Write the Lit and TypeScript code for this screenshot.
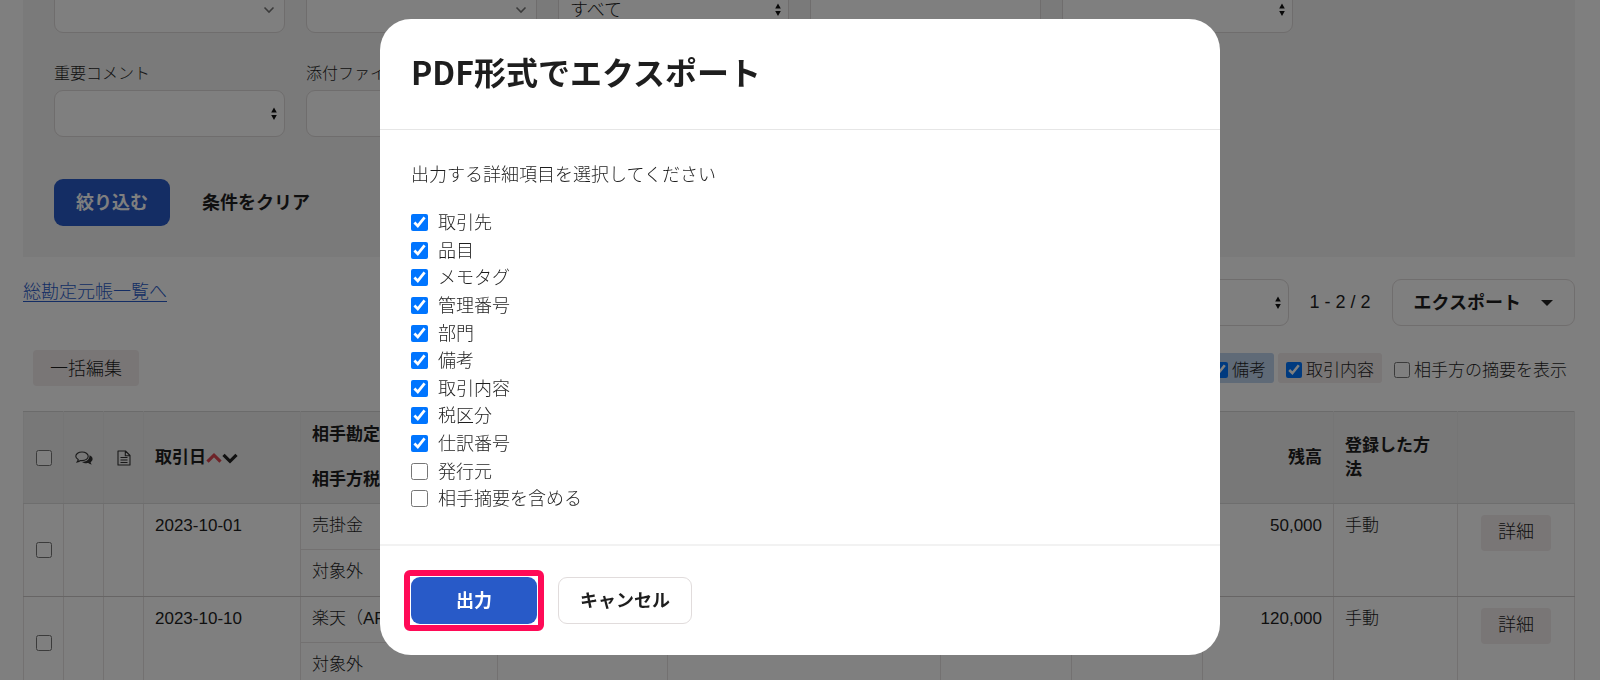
import { LitElement, html, css, svg } from "lit";
import { customElement, property, state } from "lit/decorators.js";
import { classMap } from "lit/directives/class-map.js";

interface OutputItem {
  id: string;
  label: string;
  checked: boolean;
}

interface LedgerRow {
  date: string;
  account: string;
  tax: string;
  balance: string;
  method: string;
}

const LEDGER: LedgerRow[] = [
  { date: "2023-10-01", account: "売掛金", tax: "対象外", balance: "50,000", method: "手動" },
  { date: "2023-10-10", account: "楽天（API）", tax: "対象外", balance: "120,000", method: "手動" },
];

const COLUMNS = ["check", "check", "check", "date", "account", "partner", "note", "money", "money", "money", "method", "action"];

const controls = css`
  *,
  *::before,
  *::after {
    box-sizing: border-box;
  }
  button {
    font: inherit;
    color: inherit;
    cursor: pointer;
    white-space: nowrap;
  }
  .check {
    width: 16px;
    height: 16px;
    margin: 0;
    flex: none;
  }
  .btn {
    height: 47px;
    padding: 0 21px 3px;
    border: 1px solid transparent;
    border-radius: 9px;
    background: none;
    font-size: 18px;
    font-weight: 700;
  }
  .btn-primary {
    background: #285ac8;
    color: #fff;
  }
  .btn-outline {
    background: #fff;
    border-color: #e1dcdc;
  }
`;

const stepperIcon = svg`
  <svg class="stepper" viewBox="0 0 6 14" aria-hidden="true">
    <path d="M3 0.5 L5.8 5.5 H0.2 Z M0.2 8 H5.8 L3 13 Z" fill="#111" />
  </svg>`;

@customElement("select-box")
class SelectBox extends LitElement {
  @property() label = "";
  @property() value = "";
  @property({ type: Boolean }) labelled = false;
  @property() icon: "stepper" | "chevron" | "none" = "stepper";

  static styles = [
    controls,
    css`
      :host {
        display: block;
        min-width: 0;
      }
      .caption {
        display: block;
        font-size: 16px;
        line-height: 24px;
        margin-bottom: 4px;
        white-space: nowrap;
      }
      .box {
        position: relative;
        display: block;
      }
      .control {
        display: block;
        appearance: none;
        width: 100%;
        height: 47px;
        padding: 0 11px;
        border: 1px solid #dedada;
        border-radius: 9px;
        background: #fff;
        color: #222;
        font: inherit;
        font-size: 18px;
      }
      .stepper,
      .chevron {
        position: absolute;
        pointer-events: none;
        top: 0;
        bottom: 0;
        margin: auto 0;
      }
      .stepper {
        right: 8px;
        width: 6px;
        height: 14px;
      }
      .chevron {
        right: 10px;
        width: 12px;
        height: 8px;
      }
    `,
  ];

  private renderIcon() {
    if (this.icon === "stepper") return stepperIcon;
    if (this.icon === "chevron") {
      return svg`
        <svg class="chevron" viewBox="0 0 12 8" aria-hidden="true">
          <path d="M1.5 1.5 L6 6 L10.5 1.5" fill="none" stroke="#777" stroke-width="1.6" />
        </svg>`;
    }
    return null;
  }

  render() {
    const control =
      this.icon === "stepper"
        ? html`<select id="field" class="control" aria-label=${this.label}>
            <option>${this.value}</option>
          </select>`
        : html`<input id="field" class="control" type="text" aria-label=${this.label} .value=${this.value} />`;
    return html`
      ${this.labelled ? html`<label class="caption" for="field">${this.label}</label>` : null}
      <span class="box">${control}${this.renderIcon()}</span>
    `;
  }
}

@customElement("ledger-page")
class LedgerPage extends LitElement {
  static styles = [
    controls,
    css`
      :host {
        display: block;
        padding: 0 25px 0 23px;
      }
      .filters {
        margin-top: -14px;
        padding: 0 31px 31px;
        background: #f4f4f4;
      }
      .fields {
        display: grid;
        grid-template-columns: repeat(5, 231px);
        column-gap: 21px;
        row-gap: 29px;
      }
      .filter-actions {
        display: flex;
        gap: 10px;
        margin-top: 42px;
      }
      .toolbar {
        display: flex;
        align-items: flex-start;
        gap: 21px;
        padding-top: 22px;
      }
      .ledger-link {
        margin-right: auto;
        color: #285ac8;
        font-size: 18px;
        line-height: 26px;
        text-underline-offset: 3px;
      }
      .page-size {
        width: 180px;
      }
      .range {
        font-size: 18px;
        line-height: 47px;
      }
      .export {
        display: flex;
        align-items: center;
        gap: 20px;
      }
      .caret {
        width: 12px;
        height: 6px;
        margin-top: 3px;
      }
      .options {
        display: flex;
        align-items: center;
        gap: 4px;
        padding: 24px 0 25px 10px;
      }
      .btn-small {
        height: 36px;
        padding: 0 17px 2px;
        border: 0;
        border-radius: 4px;
        background: #f2ecec;
        font-size: 18px;
      }
      .spacer {
        flex: 1;
      }
      .chip {
        display: flex;
        align-items: center;
        gap: 4px;
        height: 30px;
        padding: 0 8px;
        border-radius: 3px;
        font-size: 17px;
        white-space: nowrap;
      }
      .chip .check {
        margin-top: 4px;
      }
      .chip-on {
        background: #f2ecec;
      }
      .chip-active {
        background: #bed4ee;
      }
      .ledger {
        width: 100%;
        table-layout: fixed;
        border-collapse: collapse;
        font-size: 17px;
        line-height: 24px;
      }
      .c-check {
        width: 40px;
      }
      .c-date {
        width: 157px;
      }
      .c-account {
        width: 197px;
      }
      .c-partner {
        width: 170px;
      }
      .c-note {
        width: 273px;
      }
      .c-money {
        width: 131px;
      }
      .c-method {
        width: 124px;
      }
      th,
      td {
        padding: 0 11px;
        border: 1px solid #e6e3e3;
        text-align: left;
      }
      th {
        height: 92px;
        background: #f0f0f0;
        border-color: #ebebeb;
        border-top-color: #d7d7d7;
        border-bottom-color: #dcdcdc;
        font-weight: 700;
      }
      td {
        height: 93px;
        vertical-align: top;
        border-bottom-color: #cfcbcb;
      }
      .center {
        padding: 0;
        text-align: center;
        vertical-align: middle;
      }
      .center .check {
        display: block;
        margin: 0 auto;
      }
      .pair {
        padding: 0;
      }
      .line {
        padding: 10px 11px 11px;
        overflow: hidden;
        white-space: nowrap;
      }
      td .line + .line {
        border-top: 1px solid #e6e3e3;
      }
      .single {
        padding: 10px 11px;
      }
      .right {
        text-align: right;
      }
      .action {
        padding: 11px 0;
        text-align: center;
      }
      .sort {
        display: flex;
        align-items: center;
      }
      .arrow {
        width: 16px;
        height: 12px;
      }
      .icon {
        display: block;
        width: 18px;
        height: 18px;
        margin: 0 auto;
      }
    `,
  ];

  private renderHead() {
    return html`
      <tr>
        <th class="center"><input class="check" type="checkbox" aria-label="すべて" /></th>
        <th class="center">
          <svg class="icon" viewBox="0 0 18 18" aria-hidden="true">
            <path
              d="M7 3 C3.5 3 0.8 4.9 0.8 7.3 C0.8 8.700 1.800 9.900 3.200 10.600 C3.100 11.500 2.700 12.200 2.200 12.900 C3.500 12.600 4.600 12.100 5.400 11.500 C5.900 11.600 6.400 11.600 7 11.600 C10.500 11.600 13.200 9.700 13.200 7.300 C13.200 4.900 10.500 3 7 3 Z"
              fill="none"
              stroke="#333"
              stroke-width="1.1"
            />
            <path
              d="M14.500 6.200 C16.500 7 17.600 8.300 17.600 10 C17.600 11.300 16.800 12.400 15.600 13.200 C15.700 14.100 16.200 14.800 16.900 15.500 C15.400 15.300 14.100 14.700 13.200 14 C10.600 14.400 8.400 13.800 7 12.900 C11 12.900 14.900 10.500 14.500 6.200 Z"
              fill="#333"
            />
          </svg>
        </th>
        <th class="center">
          <svg class="icon" viewBox="0 0 18 18" aria-hidden="true">
            <path
              d="M3 2 H10.500 L15 6.500 V16 H3 Z M10.300 2 V6.700 H15 M5.500 8.500 H12.500 M5.500 11 H12.500 M5.500 13.500 H12.500"
              fill="none"
              stroke="#333"
              stroke-width="1.1"
              stroke-linejoin="round"
            />
          </svg>
        </th>
        <th>
          <span class="sort">
            取引日
            <svg class="arrow" viewBox="0 0 16 12" aria-hidden="true">
              <path d="M1.500 9.700 L8 3.200 L14.500 9.700" fill="none" stroke="#dc4650" stroke-width="3.200" />
            </svg>
            <svg class="arrow" viewBox="0 0 16 12" aria-hidden="true">
              <path d="M1.500 2.800 L8 9.300 L14.500 2.800" fill="none" stroke="#222" stroke-width="3.200" />
            </svg>
          </span>
        </th>
        <th class="pair">
          <div class="line">相手勘定科目</div>
          <div class="line">相手方税区分</div>
        </th>
        <th></th>
        <th></th>
        <th></th>
        <th></th>
        <th class="right">残高</th>
        <th>登録した方法</th>
        <th></th>
      </tr>
    `;
  }

  private renderRow(row: LedgerRow) {
    return html`
      <tr>
        <td class="center"><input class="check" type="checkbox" aria-label=${row.date} /></td>
        <td></td>
        <td></td>
        <td class="single">${row.date}</td>
        <td class="pair">
          <div class="line">${row.account}</div>
          <div class="line">${row.tax}</div>
        </td>
        <td></td>
        <td></td>
        <td></td>
        <td></td>
        <td class="single right">${row.balance}</td>
        <td class="single">${row.method}</td>
        <td class="action"><button class="btn-small" type="button">詳細</button></td>
      </tr>
    `;
  }

  render() {
    return html`
      <section class="filters">
        <div class="fields">
          <select-box icon="chevron"></select-box>
          <select-box icon="chevron"></select-box>
          <select-box value="すべて"></select-box>
          <select-box icon="none"></select-box>
          <select-box></select-box>
          <select-box labelled label="重要コメント"></select-box>
          <select-box labelled label="添付ファイル"></select-box>
        </div>
        <div class="filter-actions">
          <button class="btn btn-primary" type="button">絞り込む</button>
          <button class="btn" type="button">条件をクリア</button>
        </div>
      </section>

      <div class="toolbar">
        <a class="ledger-link" href="#">総勘定元帳一覧へ</a>
        <select-box class="page-size"></select-box>
        <span class="range">1 - 2 / 2</span>
        <button class="btn btn-outline export" type="button">
          エクスポート
          <svg class="caret" viewBox="0 0 12 6" aria-hidden="true"><path d="M0 0 H12 L6 6 Z" fill="#222" /></svg>
        </button>
      </div>

      <div class="options">
        <button class="btn-small" type="button">一括編集</button>
        <span class="spacer"></span>
        <label class="chip chip-active"><input class="check" type="checkbox" checked />備考</label>
        <label class="chip chip-on"><input class="check" type="checkbox" checked />取引内容</label>
        <label class="chip"><input class="check" type="checkbox" />相手方の摘要を表示</label>
      </div>

      <table class="ledger">
        <colgroup>
          ${COLUMNS.map((name) => html`<col class="c-${name}" />`)}
        </colgroup>
        <thead>
          ${this.renderHead()}
        </thead>
        <tbody>
          ${LEDGER.map((row) => this.renderRow(row))}
        </tbody>
      </table>
    `;
  }
}

@customElement("export-dialog")
class ExportDialog extends LitElement {
  @state() private items: OutputItem[] = [
    { id: "partner", label: "取引先", checked: true },
    { id: "item", label: "品目", checked: true },
    { id: "memo", label: "メモタグ", checked: true },
    { id: "control", label: "管理番号", checked: true },
    { id: "section", label: "部門", checked: true },
    { id: "note", label: "備考", checked: true },
    { id: "content", label: "取引内容", checked: true },
    { id: "tax", label: "税区分", checked: true },
    { id: "journal", label: "仕訳番号", checked: true },
    { id: "issuer", label: "発行元", checked: false },
    { id: "summary", label: "相手摘要を含める", checked: false },
  ];

  static styles = [
    controls,
    css`
      :host {
        display: block;
        width: 100%;
        max-width: 840px;
      }
      .dialog {
        border-radius: 31px;
        background: #fff;
        overflow: hidden;
      }
      .head {
        padding: 29px 31px 34px;
        border-bottom: 1px solid #e6e6e6;
      }
      .title {
        margin: 0;
        font-family: "Noto Sans CJK JP", sans-serif;
        font-size: 32px;
        line-height: 47px;
        font-weight: 700;
      }
      .body {
        padding: 32px 31px 30px;
        font-size: 18px;
        line-height: 27px;
      }
      .lead {
        margin: 0 0 21px;
      }
      .items {
        display: grid;
        grid-auto-rows: 1fr;
        min-height: 304px;
        margin: 0;
        padding: 0;
        list-style: none;
      }
      .item {
        display: flex;
        align-items: center;
        gap: 10px;
        width: fit-content;
      }
      .item .check {
        width: 17px;
        height: 17px;
        margin-bottom: 2px;
      }
      .foot {
        display: flex;
        gap: 21px;
        padding: 31px;
        border-top: 2px solid #f2f2f2;
      }
      .run {
        position: relative;
        min-width: 126px;
      }
      .marked::after {
        content: "";
        position: absolute;
        inset: -8px;
        border: 6px solid #ff0a57;
        border-radius: 6px;
        pointer-events: none;
      }
    `,
  ];

  private toggle(id: string) {
    this.items = this.items.map((i) => (i.id === id ? { ...i, checked: !i.checked } : i));
  }

  render() {
    return html`
      <section class="dialog" role="dialog" aria-modal="true" aria-labelledby="title">
        <header class="head"><h2 class="title" id="title">PDF形式でエクスポート</h2></header>
        <div class="body">
          <p class="lead">出力する詳細項目を選択してください</p>
          <ul class="items">
            ${this.items.map(
              (i) => html`<li>
                <label class="item">
                  <input class="check" type="checkbox" .checked=${i.checked} @change=${() => this.toggle(i.id)} />
                  ${i.label}
                </label>
              </li>`
            )}
          </ul>
        </div>
        <footer class="foot">
          <button class=${classMap({ btn: true, "btn-primary": true, run: true, marked: true })} type="button">出力</button>
          <button class="btn btn-outline" type="button">キャンセル</button>
        </footer>
      </section>
    `;
  }
}

@customElement("app-root")
class AppRoot extends LitElement {
  static styles = css`
    :host {
      display: block;
      height: 100vh;
      overflow: hidden;
      background: #fff;
      color: #1e1e1e;
      font-family: "Liberation Sans", "Noto Sans CJK JP", sans-serif;
      font-weight: 300;
    }
    .backdrop {
      position: fixed;
      inset: 0;
      display: flex;
      justify-content: center;
      align-items: flex-start;
      padding-top: 19px;
      background: rgba(0, 0, 0, 0.5);
    }
    .page {
      display: flow-root;
    }
  `;

  render() {
    return html`
      <ledger-page class="page"></ledger-page>
      <div class="backdrop"><export-dialog></export-dialog></div>
    `;
  }
}
